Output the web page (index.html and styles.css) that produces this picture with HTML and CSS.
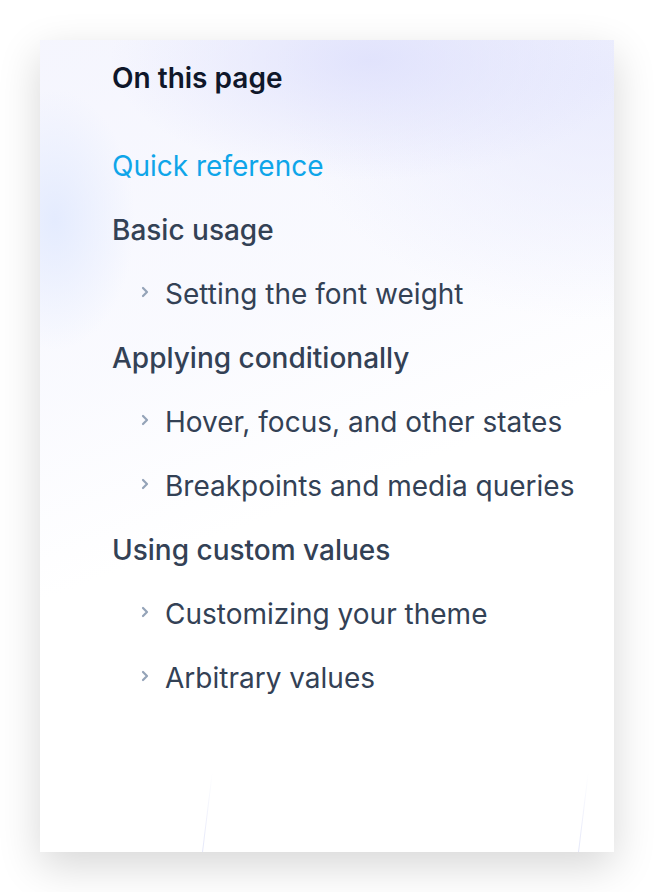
FILE: index.html
```html
<!DOCTYPE html>
<html lang="en">
<head>
<meta charset="utf-8">
<title>On this page</title>
<link rel="stylesheet" href="styles.css">
</head>
<body>
<div class="card">
  <div class="bg"><span class="streak streak-left"></span><span class="streak streak-right"></span></div>
  <div class="content">
    <h5 class="title">On this page</h5>
    <ul class="toc">
      <li><a class="item active">Quick reference</a></li>
      <li><a class="item">Basic usage</a></li>
      <li class="sub"><a class="item"><svg class="chev" width="8" height="12" viewBox="0 0 8 12"><path d="M2 2L6 6L2 10" fill="none" stroke="currentColor" stroke-width="2.2" stroke-linecap="round" stroke-linejoin="round"/></svg>Setting the font weight</a></li>
      <li><a class="item">Applying conditionally</a></li>
      <li class="sub"><a class="item"><svg class="chev" width="8" height="12" viewBox="0 0 8 12"><path d="M2 2L6 6L2 10" fill="none" stroke="currentColor" stroke-width="2.2" stroke-linecap="round" stroke-linejoin="round"/></svg>Hover, focus, and other states</a></li>
      <li class="sub"><a class="item"><svg class="chev" width="8" height="12" viewBox="0 0 8 12"><path d="M2 2L6 6L2 10" fill="none" stroke="currentColor" stroke-width="2.2" stroke-linecap="round" stroke-linejoin="round"/></svg>Breakpoints and media queries</a></li>
      <li><a class="item">Using custom values</a></li>
      <li class="sub"><a class="item"><svg class="chev" width="8" height="12" viewBox="0 0 8 12"><path d="M2 2L6 6L2 10" fill="none" stroke="currentColor" stroke-width="2.2" stroke-linecap="round" stroke-linejoin="round"/></svg>Customizing your theme</a></li>
      <li class="sub"><a class="item"><svg class="chev" width="8" height="12" viewBox="0 0 8 12"><path d="M2 2L6 6L2 10" fill="none" stroke="currentColor" stroke-width="2.2" stroke-linecap="round" stroke-linejoin="round"/></svg>Arbitrary values</a></li>
    </ul>
  </div>
</div>
</body>
</html>
```
FILE: styles.css
```css
html, body {
  margin: 0;
  padding: 0;
  background: #ffffff;
}
body {
  font-family: Inter, "Noto Sans", sans-serif;
  padding: 40px;
  width: 574px;
}
.card {
  position: relative;
  width: 574px;
  height: 812px;
  background: #ffffff;
  box-shadow: 0 14px 40px rgba(0, 0, 0, 0.16);
  overflow: hidden;
}
.bg {
  position: absolute;
  inset: 0;
  background:
    radial-gradient(ellipse 260px 120px at 330px 20px, rgba(222, 224, 252, 0.85), rgba(222, 224, 252, 0) 100%),
    radial-gradient(ellipse 320px 240px at 560px 40px, rgba(232, 234, 253, 0.9), rgba(232, 234, 253, 0) 100%),
    radial-gradient(ellipse 80px 130px at 15px 180px, rgba(226, 234, 254, 0.9), rgba(226, 234, 254, 0) 100%),
    linear-gradient(160deg, rgba(238, 239, 253, 0.6) 0%, rgba(244, 245, 254, 0.5) 35%, rgba(255, 255, 255, 0) 55%);
}
.streak {
  position: absolute;
  width: 1px;
  height: 80px;
  bottom: 0;
  background: linear-gradient(to bottom, rgba(225, 228, 248, 0), rgba(225, 228, 248, 0.9));
  transform-origin: bottom center;
  transform: rotate(7deg);
}
.streak-left {
  left: 162px;
}
.streak-right {
  left: 538px;
}
.content {
  position: relative;
  padding: 0 0 0 72px;
}
.title {
  margin: 0;
  padding-top: 22px;
  font-size: 28px;
  line-height: 32px;
  font-weight: 600;
  color: #0f172a;
}
.toc {
  list-style: none;
  margin: 40px 0 0;
  padding: 0;
}
.item {
  display: flex;
  align-items: center;
  height: 64px;
  font-size: 28px;
  font-weight: 500;
  color: #334155;
  text-decoration: none;
}
.item.active {
  color: #0ea5e9;
  font-weight: 400;
}
.sub .item {
  font-weight: 400;
  padding-left: 29px;
}
.chev {
  color: #94a3b8;
  margin-right: 16px;
  margin-top: -4px;
  flex: none;
}
```
